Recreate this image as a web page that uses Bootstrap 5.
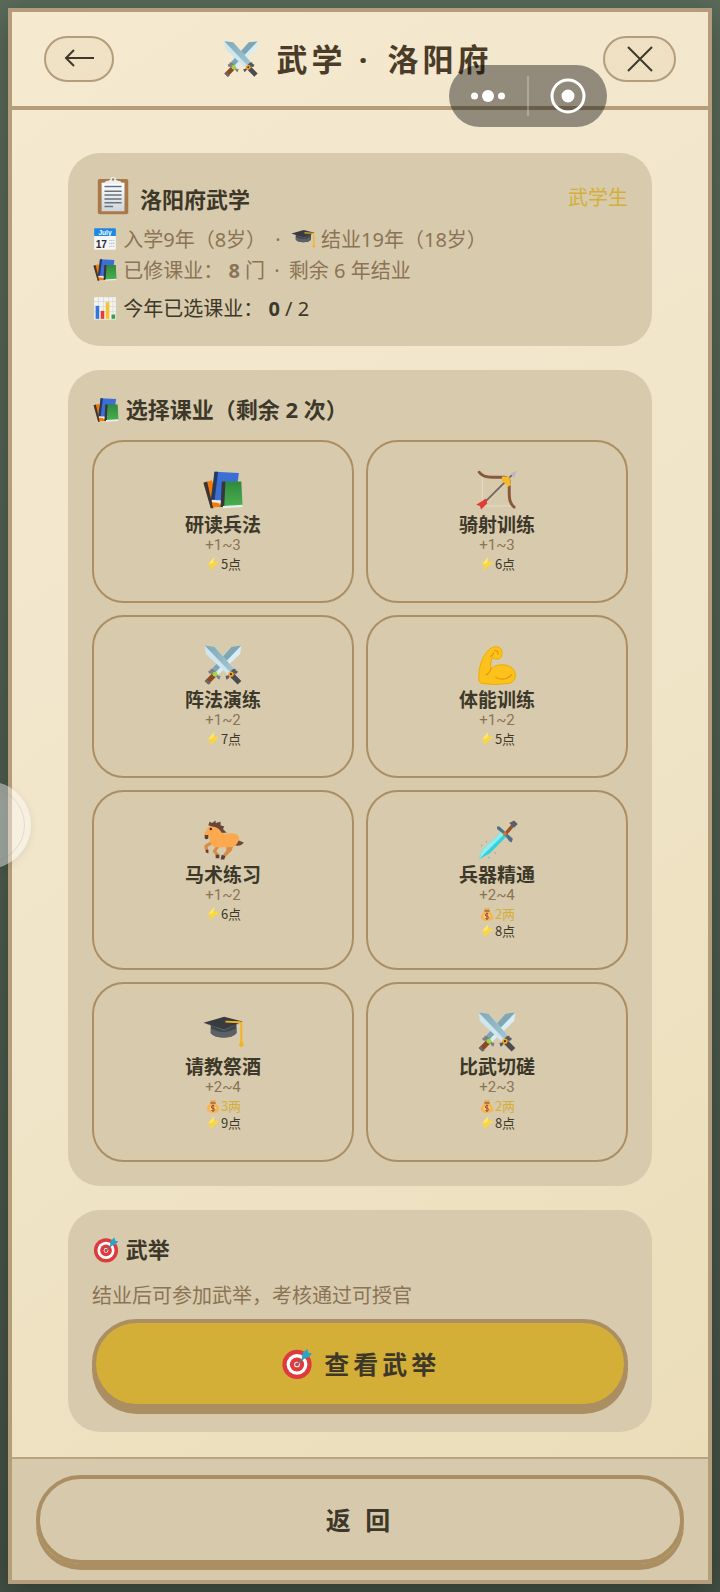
<!DOCTYPE html>
<html lang="zh-CN">
<head>
<meta charset="utf-8">
<meta name="viewport" content="width=device-width, initial-scale=1">
<title>武学 · 洛阳府</title>
<link href="https://cdn.jsdelivr.net/npm/bootstrap@5.3.0/dist/css/bootstrap.min.css" rel="stylesheet">
<style>
  :root { --ink:#3d3829; --muted:#8b7355; --line:#ab8e62; --frame:#b39d7b; --panel:#d8cbad; --gold:#d4af37; }
  body { background:linear-gradient(180deg,#5a6b5a,#435045); color:var(--ink); font-family:"Noto Sans","Noto Sans CJK SC",sans-serif; font-size:20px; line-height:31px; min-height:100vh; overflow-x:hidden; }
  .scroll-frame { border:4px solid var(--frame); background:linear-gradient(145deg,#f5e9d0 0%,#f0e5c9 50%,#eadcb6 100%); min-height:calc(100vh - 16px); box-shadow:0 8px 30px rgba(0,0,0,.3); }
  .topbar { height:98px; border-bottom:4px solid var(--frame); }
  .topbar h1 { font-size:31px; line-height:40px; font-weight:700; letter-spacing:4px; color:#4a3c28; }
  .pill { height:46px; border:2px solid var(--frame); border-radius:23px; background:rgba(224,196,150,.18); color:var(--ink); padding:0; }
  .pill-back { width:70px; } .pill-close { width:73px; }
  .hall { padding:43px 56px 25px; }
  .panel { background:var(--panel); border-radius:32px; }
  .panel h2 { font-size:22px; line-height:30px; font-weight:700; }
  .soft { color:var(--muted); } .golden { color:var(--gold); }
  .ico { display:inline-block; width:26px; height:26px; vertical-align:-5px; flex:none; }
  .ico-28 { width:28px; height:28px; vertical-align:-6px; }
  .ico-34 { width:34px; height:34px; vertical-align:-7px; }
  .ico-40 { width:40px; height:40px; vertical-align:-8px; }
  .ico-42 { width:44px; height:40px; }
  .ico-44 { width:44px; height:44px; }
  .ico-14 { width:16px; height:16px; }
  .head-row { height:40px; margin-bottom:7px; }
  .this-year { line-height:30px; }
  .panel-info { padding:24px 24px 22px; }
  .lessons { display:grid; grid-template-columns:1fr 1fr; gap:12px; }
  .lesson { border:2px solid var(--line); border-radius:32px; background:transparent; color:var(--ink); padding:26px 8px 28px; font-family:"Noto Sans CJK SC",sans-serif; }
  .lesson b { font-size:19px; line-height:24px; font-weight:700; }
  .lesson .gain { font-family:Roboto,sans-serif; font-size:15px; line-height:19px; color:var(--muted); }
  .lesson .cost { font-size:13px; line-height:18px; height:18px; }
  .lesson .silver { font-size:13px; line-height:17px; height:17px; color:var(--gold); }
  .big-btn { height:89px; border:4px solid var(--line); border-radius:45px; box-shadow:0 6px 0 var(--line); font-size:25px; line-height:36px; font-weight:700; letter-spacing:4px; color:var(--ink); background:transparent; }
  .big-btn.is-gold { background:var(--gold); }
  .dock { background:#d7caac; border-top:2px solid #b8a480; padding:16px 24px; }
  .capsule { position:absolute; top:65px; right:113px; width:158px; height:62px; border-radius:31px; background:rgba(0,0,0,.4); z-index:5; }
  .capsule button, .float-ball { border:0; background:transparent; padding:0; }
  .capsule .rule { width:2px; height:40px; background:rgba(255,255,255,.25); }
  .float-ball { position:absolute; top:781px; left:-57px; width:88px; height:88px; border-radius:50%; background:rgba(255,255,255,.42); box-shadow:0 2px 8px rgba(0,0,0,.08); }
  .float-ball span { display:block; margin:6px; height:76px; border-radius:50%; border:1px solid rgba(120,120,100,.18); }
  .w-half { width:50%; }
</style>
</head>
<body class="p-2 position-relative">

<svg width="0" height="0" class="position-absolute" aria-hidden="true">
  <defs>
    <linearGradient id="gGreen" x1="0" y1="0" x2="0" y2="1"><stop offset="0" stop-color="#2f8a3c"/><stop offset="1" stop-color="#4caf50"/></linearGradient>
    <linearGradient id="gBlade" x1="0" y1="0" x2="1" y2="1"><stop offset="0" stop-color="#7fa9b8"/><stop offset="1" stop-color="#a5c6d2"/></linearGradient>
    <linearGradient id="gPaper" x1="0" y1="0" x2="0" y2="1"><stop offset="0" stop-color="#ffffff"/><stop offset="1" stop-color="#cfd4da"/></linearGradient>
    <symbol id="books" viewBox="0 0 36 36">
      <path d="M2 12l7-2 6 21-7 2z" fill="#f57c00"/><path d="M2 12l3-1 5 22-2 0z" fill="#37373b"/>
      <path d="M11 3l20 1-3 23-18 -1z" fill="#3b6fd6"/><path d="M11 3l3 0-3 24-3-1z" fill="#263a5e"/><path d="M9 26l10 1v2L9 28z" fill="#e8eef2"/><path d="M9 29l9 1v2l-8 0z" fill="#f57c00"/>
      <path d="M18 11h15l1 20-17 1z" fill="url(#gGreen)"/><path d="M17 11h3l-1 21h-3z" fill="#37373b"/><path d="M18 31l16-1v2l-16 1z" fill="#e9eef0"/>
    </symbol>
    <symbol id="swords" viewBox="0 0 36 36">
      <path d="M33 2l-8 1L9 21l5 5L32 9z" fill="#d9eef4"/><path d="M33 2l-8 1L9 21l3 3z" fill="#7ea6b5"/><path d="M3 31l6-6 3 3-6 6z" fill="#8a4a24"/><path d="M3 31l2-1 3 3-2 1z" fill="#656b70"/><path d="M8 21q3 0 4 3t4 3l-1 3q-2-1-2-2l-4-3q-3 1-3-2 2 0 2-2z" fill="#7b8286"/><circle cx="11.500" cy="25.500" r="2" fill="#a4d53c"/>
      <path d="M3 2l8 1 16 18-5 5L4 9z" fill="#cfe6ee"/><path d="M3 2l8 1 16 18-3 3z" fill="url(#gBlade)"/><path d="M33 31l-6-6-3 3 6 6z" fill="#4c4c50"/><path d="M28 21q-3 0-4 3t-4 3l1 3q2-1 2-2l4-3q3 1 3-2-2 0-2-2z" fill="#565a5e"/><circle cx="24.500" cy="25.500" r="2.200" fill="#f5a623"/><circle cx="24.500" cy="25.500" r=".9" fill="#5b2b16"/>
    </symbol>
    <symbol id="clipboard" viewBox="0 0 44 42">
      <rect x="5" y="2" width="32" height="37" rx="2" fill="#a9794c"/><path d="M9 6h24v30H9z" fill="url(#gPaper)"/>
      <path d="M12 7q0-3 4-3l2-1q0-3 3-3t3 3l2 1q4 0 4 3z" fill="#eceff1"/><circle cx="21" cy="2.500" r="1.300" fill="#a9794c"/>
      <path d="M12 10h18M12 15h18M12 19h18M12 23h18M12 27h18M12 31h9" stroke="#68737f" stroke-width="1.600"/>
    </symbol>
    <symbol id="calendar" viewBox="0 0 36 36">
      <path d="M3 13h30v19q0 1-1 1H4q-1 0-1-1z" fill="#f4f5f6"/><path d="M3 4q0-1 1-1h28q1 0 1 1v10H3z" fill="#1e88e5"/>
      <text x="18" y="12" text-anchor="middle" font-size="9" font-weight="700" fill="#fff" font-family="Liberation Sans,sans-serif">July</text>
      <text x="13" y="30" text-anchor="middle" font-size="14" font-weight="700" fill="#2b2b2b" font-family="Liberation Sans,sans-serif">17</text>
      <path d="M24 20h7M24 24h7M24 28h7" stroke="#aab0b5" stroke-width="1.500" stroke-dasharray="1.500 1.200"/>
    </symbol>
    <symbol id="cap" viewBox="0 0 36 36">
      <path d="M8 11h21v8q-3 3.500-10.500 3.500T8 19z" fill="#41464b"/><path d="M8 15q10 6 21 0v4q-3 3.500-10.500 3.500T8 19z" fill="#5b6166"/><path d="M2 10.500l17-5 15 4-15 6.500z" fill="#383c40"/><path d="M2 10.500l17 5.500 15-6.500-15 7.500z" fill="#5c6267"/>
      <path d="M20 9.500l12 .5q1 0 1 2v13" fill="none" stroke="#f5b21c" stroke-width="1.600"/><path d="M33 23l2 6q-2 2-4 0z" fill="#f5b21c"/>
    </symbol>
    <symbol id="chart" viewBox="0 0 36 36">
      <path d="M3 3h30v31H3z" fill="#f3f3f0"/><path d="M3 9h30M3 16h30M3 23h30M9 3v31M16 3v31M23 3v31M29 3v31" stroke="#d4d6d6" stroke-width="1"/>
      <path d="M5 15h5v18H5z" fill="#2f76dc"/><path d="M12 22h5v11h-5z" fill="#e23f31"/><path d="M19 10h5v23h-5z" fill="#fbc02d"/><path d="M27 27h5v6h-5z" fill="#3a9d4c"/>
    </symbol>
    <symbol id="bow" viewBox="0 0 36 36">
      <path d="M6 7v24h24" fill="none" stroke="#e4dcc8" stroke-width=".8"/><path d="M3.500 3.500Q6 7.500 14 7.500h10Q28 8 28 12v9q0 8 4 11" fill="none" stroke="#87583a" stroke-width="2.400" stroke-linecap="round"/>
      <path d="M6 30L31 5" stroke="#75635a" stroke-width="1.400"/><path d="M22 7l6 0 1.500 7-3 1.500-1.500-3-3-1z" fill="#f4b92c"/><path d="M34 2l-2 6-3-3z" fill="#b9b3c8"/><path d="M9 25l1 4-5 5-1-3-3-1z" fill="#e23b36"/>
    </symbol>
    <symbol id="muscle" viewBox="0 0 36 36">
      <path d="M3 29Q3 15 10 7q3-4 8-4 5 1 4 7-1 4-6 3l-2-1q-2 6-1 9 5-4 12-3 8 2 8 8 0 6-5 7-12 2-23 0-2-1-2-4z" fill="#fcc21b" stroke="#eda900" stroke-width=".8"/>
      <path d="M13 11q2-1 2-3m1-2q3 0 3 3m-6 12q-1 4-4 5m8 2q7 4 13-2" fill="none" stroke="#e39a0b" stroke-width="1.100" stroke-linecap="round"/>
    </symbol>
    <symbol id="horse" viewBox="0 0 36 36">
      <path d="M28 17q4 2 7 3-3 4-8 2z" fill="#6b4a3b"/><path d="M9 20l-5 3 1 5M14 23l-3 4 3 4M22 22l0 5-3 4M26 19l-2 7-4 4" fill="none" stroke="#d98b48" stroke-width="2.600" stroke-linejoin="round"/>
      <path d="M4 11q2-6 9-6 5 2 6 8 6-1 10 0 4 3 1 7-2 4-7 4l-11 0q-6-2-5-10l-2 2q-3 0-2-5z" fill="#fba84f"/>
      <path d="M6 6l1-3 2 1 3-2 0 2 4-1 0 3 3 1-1 2 3 3-4 0q-3-5-8-5z" fill="#68463a"/><path d="M3 14h3l0 3q-3 1-3-1z" fill="#5b4036"/><circle cx="8" cy="9" r="1" fill="#3c2a22"/><path d="M4 26l2 0 0 3-2-1zM12 30l3 0 0 3-3 0zM17 30l3 1-1 3-3 0z" fill="#58413a"/>
    </symbol>
    <symbol id="dagger" viewBox="0 0 36 36">
      <path d="M3 34L6 26 22 11l4 4-14 14z" fill="#35d0dc"/><path d="M3 34L6 26 22 11l2 2z" fill="#8ceef0"/><path d="M24 12l6-7 2 2-6 7z" fill="#99532a"/><path d="M18 7l2 0 11 10-1 3-2-1-3-4-3-3-4-3z" fill="#50708a"/><path d="M28 4l4-2 3 3-3 3z" fill="#5b5f6b"/><circle cx="24.500" cy="13" r="1.600" fill="#d6752d"/><path d="M11 32l1 1M16 28l1 1M5 22l1 1M9 19l1 1" stroke="#8fbab0" stroke-width="1.200"/>
    </symbol>
    <symbol id="money" viewBox="0 0 36 36">
      <path d="M12 4l6 2 6-2-2 7h-8z" fill="#f1a33c"/><path d="M13 11h10q9 7 9 14 0 9-14 9T4 25q0-7 9-14z" fill="#f9b552"/><path d="M12 10h12v2.500H12z" fill="#8d4a28"/><circle cx="18" cy="23" r="7" fill="#fbd38a"/>
      <path d="M22 19q-1-2-4-2-4 0-4 3t4 3 4 3-4 3q-3 0-4-2M18 15v16" fill="none" stroke="#8b3c22" stroke-width="2"/>
    </symbol>
    <symbol id="bolt" viewBox="0 0 36 36"><path d="M21 2L5 20l9 2-5 12 22-20-11-2z" fill="#fdd835"/><path d="M21 2L8 18l10-2z" fill="#ffe97a"/></symbol>
    <symbol id="target" viewBox="0 0 36 36">
      <circle cx="18" cy="18.500" r="15.500" fill="#df3b3e"/><circle cx="18" cy="18.500" r="11" fill="#fff"/><circle cx="18" cy="18.500" r="7.500" fill="#df3b3e"/><circle cx="18" cy="18.500" r="3" fill="#fff"/><circle cx="18" cy="18.500" r="2" fill="#df3b3e"/>
      <path d="M18 18.500L30 7" stroke="#6c7680" stroke-width="1.600"/><path d="M23 13l1-7 5-4 1 4 4 1-4 4-6 2z" fill="#29a5c9"/>
    </symbol>
  </defs>
</svg>

<div class="scroll-frame d-flex flex-column">
  <header class="topbar d-flex align-items-center justify-content-between px-4">
    <button class="pill pill-back ms-2 d-flex align-items-center justify-content-center" type="button" aria-label="后退">
      <svg width="32" height="20" viewBox="0 0 32 20" fill="none" stroke="currentColor" stroke-width="2"><path d="M31 9H3M11 1L3 9l8 8"/></svg>
    </button>
    <h1 class="m-0 pe-1 text-nowrap"><svg class="ico ico-40 me-1" aria-hidden="true"><use href="#swords"/></svg> 武学 <span class="pe-1">·</span> 洛阳府</h1>
    <button class="pill pill-close me-2 d-flex align-items-center justify-content-center" type="button" aria-label="关闭">
      <svg width="26" height="26" viewBox="0 0 26 26" fill="none" stroke="currentColor" stroke-width="2"><path d="M1 1l24 24M25 1L1 25"/></svg>
    </button>
  </header>

  <main class="hall flex-grow-1 d-flex flex-column gap-4">
    <section class="panel panel-info">
      <div class="head-row d-flex align-items-center justify-content-between">
        <h2 class="m-0 d-flex align-items-center"><svg class="ico ico-42 me-1" aria-hidden="true"><use href="#clipboard"/></svg><span class="pt-1">洛阳府武学</span></h2>
        <span class="golden">武学生</span>
      </div>
      <div class="soft"><svg class="ico" aria-hidden="true"><use href="#calendar"/></svg> 入学9年（8岁） <span class="mx-1">·</span> <svg class="ico" aria-hidden="true"><use href="#cap"/></svg> 结业19年（18岁）</div>
      <div class="soft"><svg class="ico" aria-hidden="true"><use href="#books"/></svg> 已修课业： <strong>8</strong> 门 <span class="mx-1">·</span> 剩余 6 年结业</div>
      <div class="this-year mt-2"><svg class="ico" aria-hidden="true"><use href="#chart"/></svg> 今年已选课业： <strong>0</strong> / 2</div>
    </section>

    <section class="panel p-4">
      <h2 class="mb-3"><svg class="ico ico-28" aria-hidden="true"><use href="#books"/></svg> 选择课业（剩余 2 次）</h2>
      <div class="lessons">
        <button class="lesson d-flex flex-column align-items-center justify-content-start" type="button"><svg class="ico ico-44" aria-hidden="true"><use href="#books"/></svg><b>研读兵法</b><span class="gain">+1~3</span><span class="cost d-flex align-items-center"><svg class="ico ico-14" aria-hidden="true"><use href="#bolt"/></svg>5点</span></button>
        <button class="lesson d-flex flex-column align-items-center justify-content-start" type="button"><svg class="ico ico-44" aria-hidden="true"><use href="#bow"/></svg><b>骑射训练</b><span class="gain">+1~3</span><span class="cost d-flex align-items-center"><svg class="ico ico-14" aria-hidden="true"><use href="#bolt"/></svg>6点</span></button>
        <button class="lesson d-flex flex-column align-items-center justify-content-start" type="button"><svg class="ico ico-44" aria-hidden="true"><use href="#swords"/></svg><b>阵法演练</b><span class="gain">+1~2</span><span class="cost d-flex align-items-center"><svg class="ico ico-14" aria-hidden="true"><use href="#bolt"/></svg>7点</span></button>
        <button class="lesson d-flex flex-column align-items-center justify-content-start" type="button"><svg class="ico ico-44" aria-hidden="true"><use href="#muscle"/></svg><b>体能训练</b><span class="gain">+1~2</span><span class="cost d-flex align-items-center"><svg class="ico ico-14" aria-hidden="true"><use href="#bolt"/></svg>5点</span></button>
        <button class="lesson d-flex flex-column align-items-center justify-content-start" type="button"><svg class="ico ico-44" aria-hidden="true"><use href="#horse"/></svg><b>马术练习</b><span class="gain">+1~2</span><span class="cost d-flex align-items-center"><svg class="ico ico-14" aria-hidden="true"><use href="#bolt"/></svg>6点</span></button>
        <button class="lesson d-flex flex-column align-items-center justify-content-start" type="button"><svg class="ico ico-44" aria-hidden="true"><use href="#dagger"/></svg><b>兵器精通</b><span class="gain">+2~4</span><span class="silver d-flex align-items-center"><svg class="ico ico-14" aria-hidden="true"><use href="#money"/></svg>2两</span><span class="cost d-flex align-items-center"><svg class="ico ico-14" aria-hidden="true"><use href="#bolt"/></svg>8点</span></button>
        <button class="lesson d-flex flex-column align-items-center justify-content-start" type="button"><svg class="ico ico-44" aria-hidden="true"><use href="#cap"/></svg><b>请教祭酒</b><span class="gain">+2~4</span><span class="silver d-flex align-items-center"><svg class="ico ico-14" aria-hidden="true"><use href="#money"/></svg>3两</span><span class="cost d-flex align-items-center"><svg class="ico ico-14" aria-hidden="true"><use href="#bolt"/></svg>9点</span></button>
        <button class="lesson d-flex flex-column align-items-center justify-content-start" type="button"><svg class="ico ico-44" aria-hidden="true"><use href="#swords"/></svg><b>比武切磋</b><span class="gain">+2~3</span><span class="silver d-flex align-items-center"><svg class="ico ico-14" aria-hidden="true"><use href="#money"/></svg>2两</span><span class="cost d-flex align-items-center"><svg class="ico ico-14" aria-hidden="true"><use href="#bolt"/></svg>8点</span></button>
      </div>
    </section>

    <section class="panel p-4">
      <h2 class="mb-3"><svg class="ico ico-28" aria-hidden="true"><use href="#target"/></svg> 武举</h2>
      <p class="soft mb-2">结业后可参加武举，考核通过可授官</p>
      <button class="big-btn is-gold w-100 d-block" type="button"><svg class="ico ico-34" aria-hidden="true"><use href="#target"/></svg> 查看武举</button>
    </section>
  </main>

  <footer class="dock">
    <button class="big-btn w-100 d-block" type="button">返 回</button>
  </footer>
</div>

<div class="capsule d-flex align-items-center">
  <button class="w-half" type="button" aria-label="更多"><svg class="d-block mx-auto" width="34" height="14" viewBox="0 0 34 14" fill="#fff"><circle cx="3.500" cy="7" r="3.500"/><circle cx="17" cy="7" r="6"/><circle cx="30.500" cy="7" r="3.500"/></svg></button>
  <span class="rule"></span>
  <button class="w-half" type="button" aria-label="退出"><svg class="d-block mx-auto" width="36" height="36" viewBox="0 0 36 36"><circle cx="18" cy="18" r="16" fill="none" stroke="#fff" stroke-width="3"/><circle cx="18" cy="18" r="6.500" fill="#fff"/></svg></button>
</div>
<button class="float-ball" type="button" aria-label="悬浮球"><span></span></button>

<script src="https://cdn.jsdelivr.net/npm/bootstrap@5.3.0/dist/js/bootstrap.bundle.min.js"></script>
</body>
</html>
